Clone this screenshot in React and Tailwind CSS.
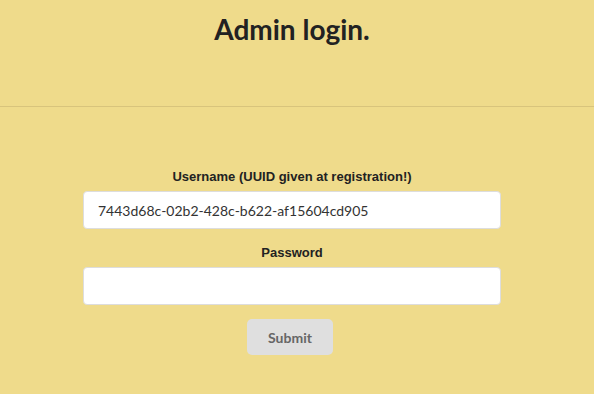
import React, { useState } from "react";

const App = () => {
  const [username, setUsername] = useState("7443d68c-02b2-428c-b622-af15604cd905");
  const [password, setPassword] = useState("");

  return (
    <div className="min-h-[394px] bg-[#efdb8b] text-[#222] font-['Lato',sans-serif]">
      <header className="h-[107px] border-b border-[#d8c47c] pr-[10px] pt-[11px]">
        <h1 className="text-center text-[28px] font-bold leading-[36px]">Admin login.</h1>
      </header>

      <form
        className="flex flex-col items-center pr-[10px] pt-[62px]"
        onSubmit={(e) => e.preventDefault()}
      >
        <label className="font-['Liberation_Sans',Arial,sans-serif] text-[13px] font-bold leading-[16px]">
          Username (UUID given at registration!)
        </label>
        <input
          value={username}
          onChange={(e) => setUsername(e.target.value)}
          className="mt-[6px] h-[38px] w-[418px] rounded-[4px] border border-[#ddd] bg-white px-[14px] text-[14px] text-[#333] outline-none"
        />
        <label className="mt-[16px] font-['Liberation_Sans',Arial,sans-serif] text-[13px] font-bold leading-[16px]">
          Password
        </label>
        <input
          type="password"
          value={password}
          onChange={(e) => setPassword(e.target.value)}
          className="mt-[6px] h-[38px] w-[418px] rounded-[4px] border border-[#ddd] bg-white px-[14px] text-[14px] outline-none"
        />
        <button
          type="submit"
          className="mr-[4px] mt-[14px] h-[36px] w-[86px] rounded-[5px] bg-[#dfdfdf] text-[14px] font-bold text-[#666]"
        >
          Submit
        </button>
      </form>
    </div>
  );
};

export default App;
